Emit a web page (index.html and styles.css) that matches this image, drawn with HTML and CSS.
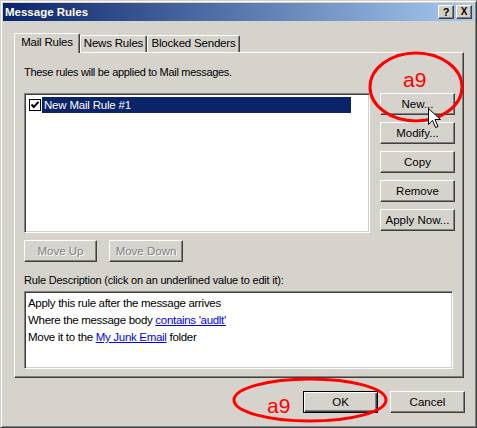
FILE: index.html
```html
<!DOCTYPE html>
<html>
<head>
<meta charset="utf-8">
<link rel="stylesheet" href="styles.css">
</head>
<body>
<div class="window">
  <div class="titlebar">
    <span class="title">Message Rules</span>
    <div class="tctrls">
      <span class="tbtn">?</span>
      <span class="tbtn tx">X</span>
    </div>
  </div>
  <div class="content">
    <div class="tabs">
      <div class="tab sel">Mail Rules</div>
      <div class="tab t2">News Rules</div>
      <div class="tab t3">Blocked Senders</div>
    </div>
    <div class="panel">
      <div class="intro">These rules will be applied to Mail messages.</div>
      <div class="mainrow">
        <div class="listbox">
          <div class="item">
            <span class="chk"><svg width="10" height="10" viewBox="0 0 10 10"><path d="M1.5 4.5 L3.8 7 L8.5 1.8" fill="none" stroke="#000" stroke-width="2"/></svg></span>
            <span class="itemlabel">New Mail Rule #1</span>
          </div>
        </div>
        <div class="sidebtns">
          <div class="btn">New...</div>
          <div class="btn">Modify...</div>
          <div class="btn">Copy</div>
          <div class="btn">Remove</div>
          <div class="btn">Apply Now...</div>
        </div>
      </div>
      <div class="moverow">
        <div class="btn disabled mv1">Move Up</div>
        <div class="btn disabled mv2">Move Down</div>
      </div>
      <div class="desclabel">Rule Description (click on an underlined value to edit it):</div>
      <div class="descbox">
        <div class="dline">Apply this rule after the message arrives</div>
        <div class="dline">Where the message body <span class="lnk">contains 'audlt'</span></div>
        <div class="dline">Move it to the <span class="lnk">My Junk Email</span> folder</div>
      </div>
    </div>
    <div class="footer">
      <div class="btn default">OK</div>
      <div class="btn">Cancel</div>
    </div>
  </div>
  <svg class="annot" width="477" height="428" viewBox="0 0 477 428">
    <ellipse cx="416" cy="87" rx="46" ry="34" fill="none" stroke="#ff0000" stroke-width="3"/>
    <text x="403" y="87" class="a9">a9</text>
    <ellipse cx="310" cy="400" rx="76" ry="21" fill="none" stroke="#ff0000" stroke-width="3"/>
    <text x="267" y="413" class="a9">a9</text>
    <path d="M428.5 108.5 L428.5 124.5 L432.5 120.5 L435.5 127.5 L438 126.5 L435 119.5 L440.5 119.5 Z" fill="#fff" stroke="#000" stroke-width="1"/>
  </svg>
</div>
</body>
</html>
```
FILE: styles.css
```css
html, body {
  margin: 0;
  padding: 0;
  background: #d4d0c8;
}
body {
  font-family: "Liberation Sans", Arial, sans-serif;
  font-size: 11px;
  letter-spacing: -0.2px;
  color: #000;
}
.window {
  position: relative;
  width: 477px;
  height: 428px;
  box-sizing: border-box;
  border: 1px solid;
  border-color: #d4d0c8 #404040 #404040 #d4d0c8;
  box-shadow: inset 1px 1px #ffffff, inset -1px -1px #808080;
  padding: 2px;
  background: #d6d3cc;
}
.titlebar {
  height: 18px;
  background: linear-gradient(to right, #0a246a, #a6caf0);
  display: flex;
  align-items: center;
  justify-content: space-between;
  padding-left: 2px;
}
.title {
  color: #fff;
  font-weight: bold;
  font-size: 11.5px;
  letter-spacing: 0;
}
.tctrls {
  display: flex;
  gap: 2px;
  margin-right: 2px;
}
.tbtn {
  width: 16px;
  height: 14px;
  box-sizing: border-box;
  background: #d4d0c8;
  border: 1px solid;
  border-color: #fff #404040 #404040 #fff;
  box-shadow: inset -1px -1px #808080;
  font-weight: bold;
  font-size: 11px;
  line-height: 12px;
  text-align: center;
  color: #000;
  letter-spacing: 0;
}
.tx {
  font-size: 10px;
}
.content {
  padding: 12px 10px 0 11px;
}
.tabs {
  display: flex;
  height: 19px;
  align-items: flex-end;
  padding-left: 1px;
  position: relative;
  z-index: 1;
}
.tab {
  height: 17px;
  box-sizing: border-box;
  white-space: nowrap;
  text-align: center;
  line-height: 15px;
  border: 1px solid;
  border-bottom: none;
  border-color: #fff #404040 #404040 #fff;
  box-shadow: inset -1px 0 #808080;
  border-radius: 2px 2px 0 0;
  background: #d6d3cc;
  font-size: 11.5px;
}
.tab.sel {
  width: 66px;
  height: 20px;
  margin-bottom: -1px;
  line-height: 17px;
  margin-left: -1px;
}
.tab.t2 { width: 67px; }
.tab.t3 { width: 93px; }
.panel {
  height: 326px;
  box-sizing: border-box;
  border: 1px solid;
  border-color: #fff #404040 #404040 #fff;
  box-shadow: inset -1px -1px #808080;
  padding: 13px 0 0 9px;
}
.intro {
  line-height: 13px;
  height: 13px;
  font-size: 11px;
  letter-spacing: -0.3px;
}
.mainrow {
  display: flex;
  gap: 10px;
  margin-top: 14px;
}
.listbox {
  width: 346px;
  height: 140px;
  box-sizing: border-box;
  background: #fff;
  border: 1px solid;
  border-color: #808080 #fff #fff #808080;
  box-shadow: inset 1px 1px #404040, inset -1px -1px #d4d0c8;
  padding: 3px 0 0 4px;
}
.item {
  display: flex;
  align-items: center;
  height: 16px;
}
.chk {
  width: 12px;
  height: 12px;
  box-sizing: border-box;
  border: 1px solid #000;
  background: #fff;
  display: flex;
  align-items: center;
  justify-content: center;
  margin-right: 1px;
}
.itemlabel {
  width: 307px;
  height: 16px;
  line-height: 16px;
  padding-left: 2px;
  background: #0a246a;
  color: #fff;
  font-size: 11.5px;
}
.sidebtns {
  display: flex;
  flex-direction: column;
  gap: 7px;
  width: 75px;
}
.btn {
  height: 22px;
  box-sizing: border-box;
  background: #d6d3cc;
  border: 1px solid;
  border-color: #fff #404040 #404040 #fff;
  box-shadow: inset -1px -1px #808080;
  line-height: 20px;
  text-align: center;
  font-size: 11.5px;
  letter-spacing: 0;
}
.moverow {
  display: flex;
  gap: 12px;
  margin-top: 7px;
}
.mv1 { width: 73px; }
.mv2 { width: 74px; }
.disabled {
  color: #808080;
  text-shadow: 1px 1px #fff;
}
.desclabel {
  margin-top: 12px;
  line-height: 13px;
  height: 13px;
  font-size: 11px;
  letter-spacing: -0.2px;
}
.descbox {
  margin-top: 4px;
  width: 429px;
  height: 78px;
  box-sizing: border-box;
  background: #fff;
  border: 1px solid;
  border-color: #808080 #fff #fff #808080;
  box-shadow: inset 1px 1px #404040, inset -1px -1px #d4d0c8;
  padding: 3px 0 0 3px;
}
.dline {
  line-height: 17px;
  height: 17px;
  font-size: 11.5px;
  letter-spacing: -0.3px;
}
.lnk {
  color: #0000ff;
  text-decoration: underline;
}
.footer {
  display: flex;
  justify-content: flex-end;
  gap: 12px;
  margin-top: 13px;
  margin-right: -1px;
}
.footer .btn {
  width: 75px;
}
.btn.default {
  border: 1px solid #000;
  box-shadow: inset 1px 1px #fff, inset -1px -1px #404040, inset -2px -2px #808080;
}
.annot {
  position: absolute;
  left: -1px;
  top: -1px;
  pointer-events: none;
}
.a9 {
  font-family: "Liberation Sans", Arial, sans-serif;
  font-size: 21px;
  letter-spacing: 0;
  fill: #ff0000;
}
```
